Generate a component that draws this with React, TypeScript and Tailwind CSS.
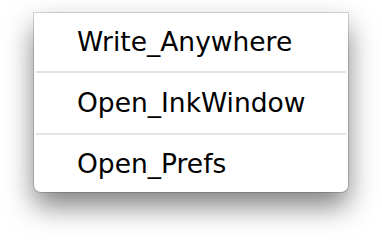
import { useState } from 'react';

const items = ['Write_Anywhere', 'Open_InkWindow', 'Open_Prefs'];

const rowClass = [
  'h-[58px] pt-[14px]',
  'h-[60px] pt-[15px]',
  'h-[57px] pt-[14px]',
];

export default function App() {
  const [active, setActive] = useState<number | null>(null);

  return (
    <div className="w-[382px] h-[246px] bg-white pt-[13px] pl-[34px]">
      <div
        className="w-[314px] bg-white rounded-b-[7px] shadow-[0_14px_28px_rgba(0,0,0,0.5)] ring-1 ring-black/15"
        style={{ fontFamily: '"DejaVu Sans", Verdana, sans-serif' }}
      >
        {items.map((label, i) => (
          <div key={label}>
            {i > 0 && <div className="mx-[2px] h-[2px] bg-[#e3e3e3]" />}
            <div
              onMouseEnter={() => setActive(i)}
              onMouseLeave={() => setActive(null)}
              className={`${rowClass[i]} pl-[43px] text-[26.5px] leading-[30px] text-black cursor-default ${
                active === i ? 'bg-gray-50' : ''
              }`}
            >
              {label}
            </div>
          </div>
        ))}
      </div>
    </div>
  );
}
